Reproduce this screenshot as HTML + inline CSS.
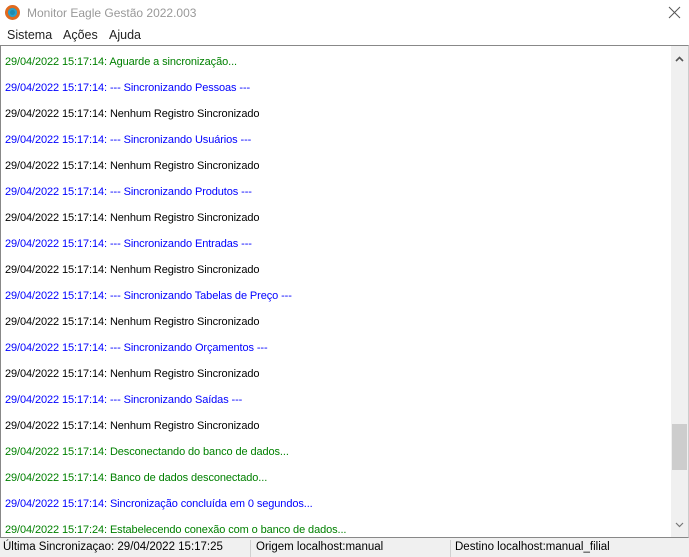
<!DOCTYPE html>
<html><head><meta charset="utf-8"><style>
*{margin:0;padding:0;box-sizing:border-box}
body{width:689px;height:557px;background:#fff;font-family:"Liberation Sans",sans-serif;position:relative;overflow:hidden}
.title{position:absolute;left:0;top:0;width:689px;height:26px;background:#fff}
.title .t{position:absolute;left:27px;top:6px;font-size:12px;color:#999}
.icon{position:absolute;left:5px;top:5px;width:15px;height:15px;border-radius:50%;background:#e06a1f}
.icon:after{content:"";position:absolute;left:3px;top:3px;width:9px;height:9px;border-radius:50%;background:#1d8ab0;box-shadow:inset 0 0 0 2px #2aa0c8}
.close{position:absolute;left:668px;top:6px;width:13px;height:13px}
.menu{position:absolute;left:0;top:26px;height:19px;width:689px;font-size:12.5px;color:#222}
.menu span{position:absolute;top:2px}
.log{position:absolute;left:0;top:45px;width:689px;height:493px;border:1px solid #888;border-right-color:#ccc;background:#fff}
.line{position:absolute;left:4px;font-size:11px;white-space:nowrap;letter-spacing:-0.1px}
.g{color:#008000}.b{color:#0000ff}.k{color:#000}
.sb{position:absolute;left:670px;top:0;width:17px;height:491px;background:#f0f0f0}
.thumb{position:absolute;left:1px;top:378px;width:15px;height:46px;background:#cdcdcd}
.status{position:absolute;left:0;top:538px;width:689px;height:19px;background:#f0f0f0;font-size:11.5px;color:#000}
.status span{position:absolute;top:3px}
.sep{position:absolute;top:2px;width:1px;height:17px;background:#d0d0d0}
</style></head><body>
<div class="title"><div class="icon"></div><div class="t">Monitor Eagle Gestão 2022.003</div>
<svg class="close" viewBox="0 0 13 13"><path d="M1 1L12 12M12 1L1 12" stroke="#555" stroke-width="1"/></svg></div>
<div class="menu"><span style="left:7px">Sistema</span><span style="left:63px">Ações</span><span style="left:109px">Ajuda</span></div>
<div class="log">
<div class="line g" style="top:10px">29/04/2022 15:17:14: Aguarde a sincronização...</div>
<div class="line b" style="top:36px">29/04/2022 15:17:14: --- Sincronizando Pessoas ---</div>
<div class="line k" style="top:62px">29/04/2022 15:17:14: Nenhum Registro Sincronizado</div>
<div class="line b" style="top:88px">29/04/2022 15:17:14: --- Sincronizando Usuários ---</div>
<div class="line k" style="top:114px">29/04/2022 15:17:14: Nenhum Registro Sincronizado</div>
<div class="line b" style="top:140px">29/04/2022 15:17:14: --- Sincronizando Produtos ---</div>
<div class="line k" style="top:166px">29/04/2022 15:17:14: Nenhum Registro Sincronizado</div>
<div class="line b" style="top:192px">29/04/2022 15:17:14: --- Sincronizando Entradas ---</div>
<div class="line k" style="top:218px">29/04/2022 15:17:14: Nenhum Registro Sincronizado</div>
<div class="line b" style="top:244px">29/04/2022 15:17:14: --- Sincronizando Tabelas de Preço ---</div>
<div class="line k" style="top:270px">29/04/2022 15:17:14: Nenhum Registro Sincronizado</div>
<div class="line b" style="top:296px">29/04/2022 15:17:14: --- Sincronizando Orçamentos ---</div>
<div class="line k" style="top:322px">29/04/2022 15:17:14: Nenhum Registro Sincronizado</div>
<div class="line b" style="top:348px">29/04/2022 15:17:14: --- Sincronizando Saídas ---</div>
<div class="line k" style="top:374px">29/04/2022 15:17:14: Nenhum Registro Sincronizado</div>
<div class="line g" style="top:400px">29/04/2022 15:17:14: Desconectando do banco de dados...</div>
<div class="line g" style="top:426px">29/04/2022 15:17:14: Banco de dados desconectado...</div>
<div class="line b" style="top:452px">29/04/2022 15:17:14: Sincronização concluída em 0 segundos...</div>
<div class="line g" style="top:478px">29/04/2022 15:17:24: Estabelecendo conexão com o banco de dados...</div>
<div class="sb"><svg style="position:absolute;left:4px;top:10px" width="9" height="6" viewBox="0 0 9 6"><path d="M1 5L4.5 1.5L8 5" stroke="#555" stroke-width="1.6" fill="none"/></svg>
<div class="thumb"></div>
<svg style="position:absolute;left:4px;top:476px" width="9" height="6" viewBox="0 0 9 6"><path d="M1 1L4.5 4.5L8 1" stroke="#777" stroke-width="1.2" fill="none"/></svg></div>
</div>
<div class="status"><span style="left:3px">Última Sincronizaçao: 29/04/2022 15:17:25</span><div class="sep" style="left:250px"></div><span style="left:256px">Origem localhost:manual</span><div class="sep" style="left:450px"></div><span style="left:455px">Destino localhost:manual_filial</span></div>
</body></html>
